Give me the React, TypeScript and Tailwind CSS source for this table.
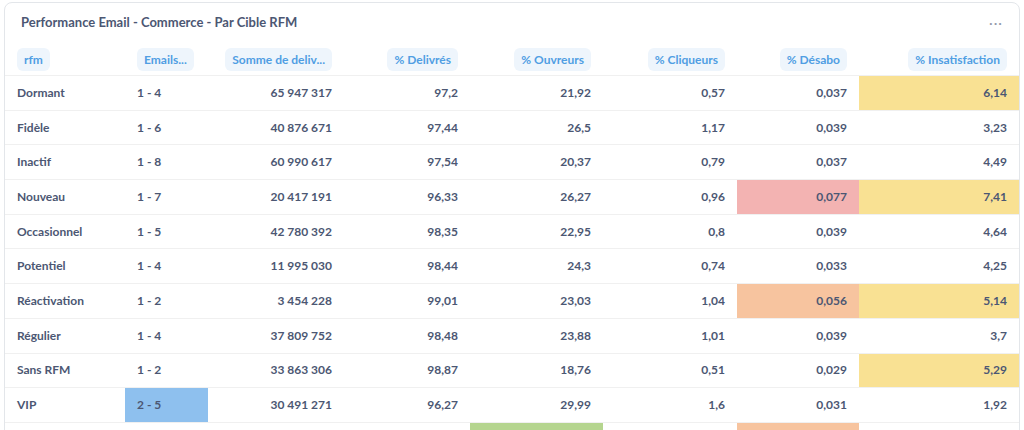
import React from "react";

type Cell = { v: string; bg?: string };

const columns = [
  { label: "rfm", align: "left" },
  { label: "Emails...", align: "left" },
  { label: "Somme de deliv...", align: "right" },
  { label: "% Delivrés", align: "right" },
  { label: "% Ouvreurs", align: "right" },
  { label: "% Cliqueurs", align: "right" },
  { label: "% Désabo", align: "right" },
  { label: "% Insatisfaction", align: "right" },
];

const YELLOW = "bg-[#f9e193]";
const PINK = "bg-[#f3b3b2]";
const ORANGE = "bg-[#f7c49f]";
const BLUE = "bg-[#8ec0ee]";

const rows: Cell[][] = [
  [{ v: "Dormant" }, { v: "1 - 4" }, { v: "65 947 317" }, { v: "97,2" }, { v: "21,92" }, { v: "0,57" }, { v: "0,037" }, { v: "6,14", bg: YELLOW }],
  [{ v: "Fidèle" }, { v: "1 - 6" }, { v: "40 876 671" }, { v: "97,44" }, { v: "26,5" }, { v: "1,17" }, { v: "0,039" }, { v: "3,23" }],
  [{ v: "Inactif" }, { v: "1 - 8" }, { v: "60 990 617" }, { v: "97,54" }, { v: "20,37" }, { v: "0,79" }, { v: "0,037" }, { v: "4,49" }],
  [{ v: "Nouveau" }, { v: "1 - 7" }, { v: "20 417 191" }, { v: "96,33" }, { v: "26,27" }, { v: "0,96" }, { v: "0,077", bg: PINK }, { v: "7,41", bg: YELLOW }],
  [{ v: "Occasionnel" }, { v: "1 - 5" }, { v: "42 780 392" }, { v: "98,35" }, { v: "22,95" }, { v: "0,8" }, { v: "0,039" }, { v: "4,64" }],
  [{ v: "Potentiel" }, { v: "1 - 4" }, { v: "11 995 030" }, { v: "98,44" }, { v: "24,3" }, { v: "0,74" }, { v: "0,033" }, { v: "4,25" }],
  [{ v: "Réactivation" }, { v: "1 - 2" }, { v: "3 454 228" }, { v: "99,01" }, { v: "23,03" }, { v: "1,04" }, { v: "0,056", bg: ORANGE }, { v: "5,14", bg: YELLOW }],
  [{ v: "Régulier" }, { v: "1 - 4" }, { v: "37 809 752" }, { v: "98,48" }, { v: "23,88" }, { v: "1,01" }, { v: "0,039" }, { v: "3,7" }],
  [{ v: "Sans RFM" }, { v: "1 - 2" }, { v: "33 863 306" }, { v: "98,87" }, { v: "18,76" }, { v: "0,51" }, { v: "0,029" }, { v: "5,29", bg: YELLOW }],
  [{ v: "VIP" }, { v: "2 - 5", bg: BLUE }, { v: "30 491 271" }, { v: "96,27" }, { v: "29,99" }, { v: "1,6" }, { v: "0,031" }, { v: "1,92" }],
  [{ v: "" }, { v: "" }, { v: "" }, { v: "" }, { v: "", bg: "bg-[#b5d58f]" }, { v: "" }, { v: "", bg: ORANGE }, { v: "" }],
];

const grid = "grid grid-cols-[120px_83px_136px_126px_133px_134px_122px_160px]";

export default function App() {
  return (
    <div className="h-[430px] overflow-hidden bg-white pt-[2px] pl-[4px] font-['Lato','Liberation_Sans',sans-serif] text-[#4c5773]">
      <div className="w-[1016px] rounded-lg border border-[#e3e6ea] bg-white">
        <div className="flex h-[40px] items-center justify-between pl-[16px] pr-[16px]">
          <h1 className="text-[13px] font-bold text-[#4c5773]">Performance Email - Commerce - Par Cible RFM</h1>
          <span className="text-[14px] leading-none tracking-[1px] text-[#949aab]">···</span>
        </div>
        <div className={`${grid} h-[33px] border-b border-[#f0f0f0]`}>
          {columns.map((c) => (
            <div
              key={c.label}
              className={`flex items-center px-[12px] ${c.align === "right" ? "justify-end" : "justify-start"}`}
            >
              <span className="rounded-md bg-[#eef5fc] px-[7px] py-[4px] text-[12px] font-bold leading-[15px] text-[#509ee3]">
                {c.label}
              </span>
            </div>
          ))}
        </div>
        {rows.map((r, i) => (
          <div key={i} className={`${grid} h-[34.7px] border-b border-[#f0f0f0]`}>
            {r.map((cell, j) => (
              <div
                key={j}
                className={`flex items-center px-[12px] text-[12px] font-bold ${
                  columns[j].align === "right" ? "justify-end" : "justify-start"
                } ${cell.bg ?? ""}`}
              >
                {cell.v}
              </div>
            ))}
          </div>
        ))}
      </div>
    </div>
  );
}
